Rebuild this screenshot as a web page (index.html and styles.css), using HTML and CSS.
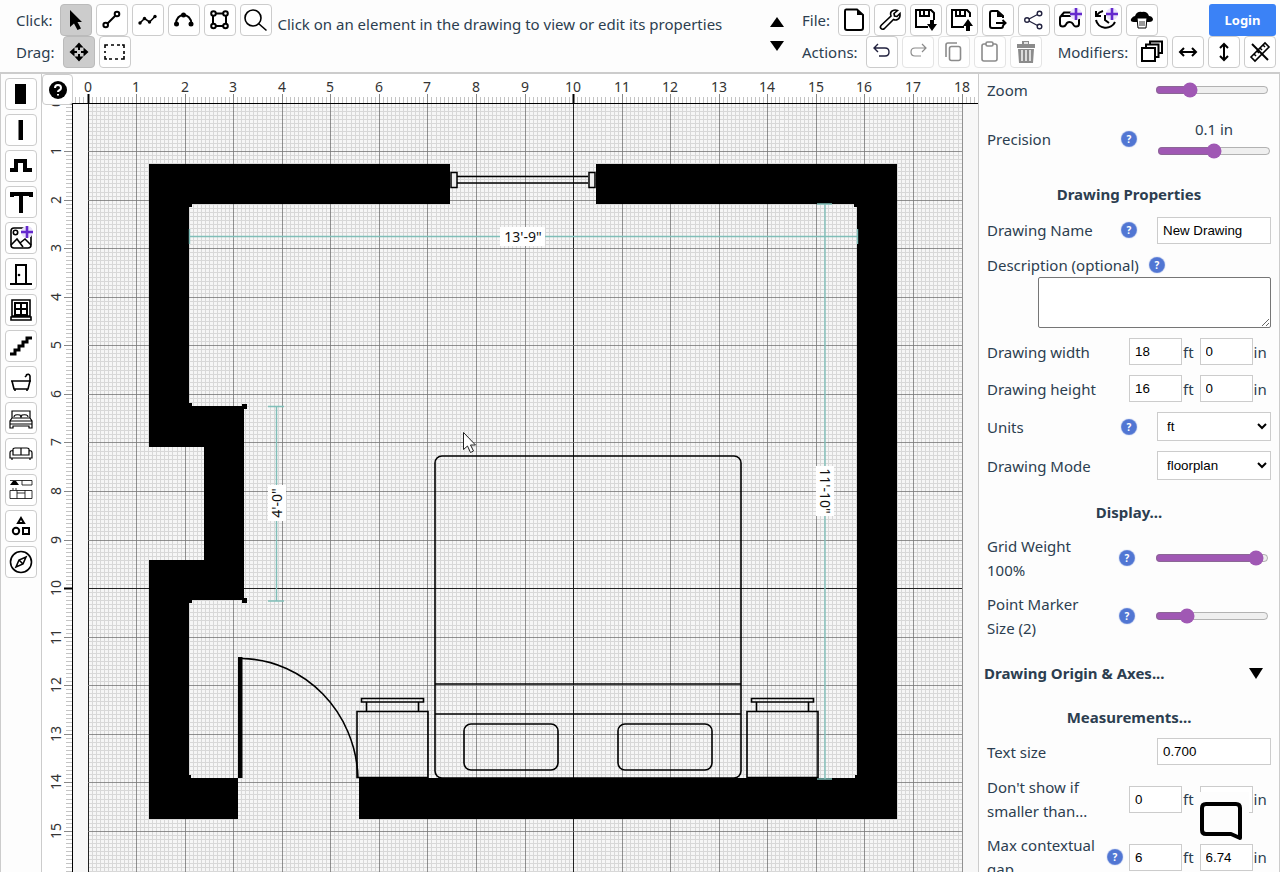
FILE: index.html
```html
<!DOCTYPE html>
<html lang="en">
<head>
<meta charset="utf-8">
<title>New Drawing</title>
<link rel="stylesheet" href="styles.css">
</head>
<body>
<div class="app">
  <header class="toolbar">
    <div class="tool-rows">
      <div class="tool-row">
        <span class="row-label">Click:</span>
        <button class="tool active" aria-label="Select"><svg viewBox="0 0 32 32"><path class="solid" d="M10 6V23L14 19.500L17.500 26L21 24.500L17.500 18H22Z"/></svg></button>
        <button class="tool" aria-label="Line"><svg viewBox="0 0 32 32"><path class="ink" d="M11.500 19.500L19.500 11.500"/><circle class="ink" cx="9.700" cy="21" r="2.300"/><circle class="ink" cx="21" cy="10" r="2.300"/></svg></button>
        <button class="tool" aria-label="Polyline"><svg viewBox="0 0 32 32"><path class="mid" d="M8 19L12.500 14.500L17.500 18L23 12.500"/><circle class="solid" cx="8" cy="19" r="1.700"/><circle class="solid" cx="12.500" cy="14.500" r="1.700"/><circle class="solid" cx="17.500" cy="18" r="1.700"/><circle class="solid" cx="23" cy="12.500" r="1.700"/></svg></button>
        <button class="tool" aria-label="Arc"><svg viewBox="0 0 32 32"><path class="ink" d="M8 20C8 8 23 8 23.500 20"/><circle class="solid" cx="8.500" cy="20" r="2.500"/><circle class="solid" cx="15.500" cy="11" r="2.500"/><circle class="solid" cx="23" cy="20" r="2.500"/></svg></button>
        <button class="tool" aria-label="Shape"><svg viewBox="0 0 32 32"><path class="ink" d="M11.500 9.500H19.500M11.500 22H19.500M9 12V19.500M22 12V19.500"/><circle class="ink" cx="9.500" cy="9.500" r="2.300"/><circle class="ink" cx="21.500" cy="9.500" r="2.300"/><circle class="ink" cx="9.500" cy="22" r="2.300"/><circle class="ink" cx="21.500" cy="22" r="2.300"/></svg></button>
        <button class="tool" aria-label="Zoom"><svg viewBox="0 0 32 32"><circle class="mid" cx="13" cy="14" r="8"/><path class="mid" d="M18.500 19.500L26.500 26.500"/></svg></button>
      </div>
      <div class="tool-row">
        <span class="row-label">Drag:</span>
        <button class="tool active" aria-label="Move"><svg viewBox="0 0 32 32"><path class="ink" d="M16 8V14M16 18V24M8 16H14M18 16H24"/><path class="solid" d="M11.500 11.500L16 6.500L20.500 11.500ZM11.500 20.500L16 25.500L20.500 20.500ZM11.500 11.500L6.500 16L11.500 20.500ZM20.500 11.500L25.500 16L20.500 20.500Z"/></svg></button>
        <button class="tool" aria-label="Marquee"><svg viewBox="0 0 32 32"><path class="mid" d="M6 12V9H9M12 9H15M18 9H21M23 9H25V12M25 15V18M25 20V23H22M19 23H16M13 23H10M8 23H6V20M6 17V15"/></svg></button>
      </div>
    </div>
    <p class="hint">Click on an element in the drawing to view or edit its properties</p>
    <div class="hint-nav">
      <button aria-label="Previous"><svg width="14" height="12" viewBox="0 0 14 12"><path d="M0 11L7 1L14 11Z"/></svg></button>
      <button aria-label="Next"><svg width="14" height="12" viewBox="0 0 14 12"><path d="M0 1L7 11L14 1Z"/></svg></button>
    </div>
    <div class="tool-rows commands">
      <div class="tool-row">
        <span class="row-label">File:</span>
        <button class="tool" aria-label="New"><svg viewBox="0 0 32 32"><path class="ink" d="M8 5.500H19L25 11V24Q25 26 23 26H9Q7 26 7 24V7Q7 5.500 8 5.500Z"/><path class="solid" d="M19 5.500V11H25Z"/></svg></button>
        <button class="tool" aria-label="Settings"><svg viewBox="0 0 32 32"><path class="mid" d="M17 12Q15.500 8 19 6.500Q21 5.500 23.500 6.500L20 9.500L20.500 12L23 12.500L26 9.500Q26.500 14 23.500 15.500Q21.500 16.500 19.500 15.500L10.500 24.500Q8.500 26 7 24.500Q5.500 23 7.500 21Z"/></svg></button>
        <button class="tool" aria-label="Save"><svg viewBox="0 0 32 32"><path class="ink" d="M18 23H6V6H21L24 9V16"/><path class="solid" d="M9 5H20V13H9ZM20 16H24V20H27L22 27L17 20H20Z"/><path class="gap" d="M11 7H13V11H11ZM15 7H18V11H15Z"/></svg></button>
        <button class="tool" aria-label="Open"><svg viewBox="0 0 32 32"><path class="ink" d="M18 23H6V6H21L24 9V13"/><path class="solid" d="M9 5H20V13H9ZM20 27H24V22H27L22 15L17 22H20Z"/><path class="gap" d="M11 7H13V11H11ZM15 7H18V11H15Z"/></svg></button>
        <button class="tool" aria-label="Export"><svg viewBox="0 0 32 32"><path class="ink" d="M21 14V12L15.500 7H10Q8 7 8 9V22Q8 24 10 24H19Q21 24 21 22M14 19H23M20.500 16L23.500 19L20.500 22"/><path class="solid" d="M15 7V13H21Z"/></svg></button>
        <button class="tool" aria-label="Share"><svg viewBox="0 0 32 32"><path class="navy" d="M11 15L19.500 10.500M11 17L19.500 21.500"/><circle class="navy" cx="9" cy="16" r="2.300"/><circle class="navy" cx="21.500" cy="9.500" r="2.300"/><circle class="navy" cx="21.500" cy="22.500" r="2.300"/></svg></button>
        <button class="tool" aria-label="3D view"><svg viewBox="0 0 32 32"><path class="ink" d="M8 12H23Q25 12 25 14V20Q25 22.500 22 22.500Q20 22.500 19 20Q18 18 15.500 18Q13 18 12 20.500Q11 22.500 9 22.500Q6 22.500 6 20V14Q6 12 8 12ZM7 12L10 8.500H18"/><circle class="halo" cx="22" cy="10" r="6"/><path class="plus" d="M22 4V16M16 10H28"/></svg></button>
        <button class="tool" aria-label="History"><svg viewBox="0 0 32 32"><path class="ink" d="M6 16A10 9.500 0 0 0 25 18M7 11Q9 8 13 7M6 7V12H11M15 11V16L19 19"/><circle class="halo" cx="22" cy="10" r="6"/><path class="plus" d="M22 4V16M16 10H28"/></svg></button>
        <button class="tool" aria-label="Clear cloud storage"><svg viewBox="0 0 32 32"><path class="solid" d="M8 18Q4 18 5 15Q7 12 9 12Q11 7 16 8Q21 7 23 12Q26 12 27 15Q27 18 23 18Z"/><path class="bin" d="M11 14H21L20 24H12Z"/><path class="hair" d="M14 17V22M16 17V22M18 17V22"/></svg></button>
        <button class="login">Login</button>
      </div>
      <div class="tool-row">
        <span class="row-label">Actions:</span>
        <button class="tool" aria-label="Undo"><svg viewBox="0 0 32 32"><path class="navy" d="M12 8L8 12L12 16M8 12H19Q23 12 23 16T19 20H13"/></svg></button>
        <button class="tool faded" aria-label="Redo"><svg viewBox="0 0 32 32"><path class="thin" d="M20 8L24 12L20 16M24 12H13Q9 12 9 16T13 20H19"/></svg></button>
        <button class="tool faded" aria-label="Copy"><svg viewBox="0 0 32 32"><path class="mid" d="M8 21V9Q8 7 10 7H19"/><rect class="mid" x="11.500" y="10.500" width="11" height="14" rx="2"/></svg></button>
        <button class="tool faded" aria-label="Paste"><svg viewBox="0 0 32 32"><path class="mid" d="M12 8H10Q8 8 8 10V23Q8 25 10 25H21Q23 25 23 23V10Q23 8 21 8H19"/><rect class="mid" x="12" y="6" width="7" height="4" rx="1.500"/></svg></button>
        <button class="tool faded" aria-label="Delete"><svg viewBox="0 0 32 32"><path class="solid" d="M7 8H12V5H19V8H25V12H7ZM8 13H24L23 27H9Z"/><path class="slits" d="M12 14V25M16 14V25M20 14V25M14 7H18"/></svg></button>
        <span class="row-label second">Modifiers:</span>
        <button class="tool" aria-label="Duplicate"><svg viewBox="0 0 32 32"><path class="ink" d="M10 11V8.500H22.500V21H20M14 8V5.500H26V17H23"/><rect class="ink" x="6" y="12" width="13" height="13"/></svg></button>
        <button class="tool" aria-label="Flip horizontally"><svg viewBox="0 0 32 32"><path class="ink" d="M8 16H24M12 12L8 16L12 20M20 12L24 16L20 20"/></svg></button>
        <button class="tool" aria-label="Flip vertically"><svg viewBox="0 0 32 32"><path class="ink" d="M16 8V24M12 12L16 8L20 12M12 20L16 24L20 20"/></svg></button>
        <button class="tool" aria-label="Hide measurements"><svg viewBox="0 0 32 32"><path class="mid" d="M7 21L21 7L25 11L11 25ZM10 18L12 20M13 15L15 17M16 12L18 14M19 9L21 11"/><path class="ink" d="M8 8L24 24"/></svg></button>
      </div>
    </div>
  </header>

  <main class="workspace">
    <nav class="palette" aria-label="Elements">
      <button class="tool" aria-label="Thick wall"><svg viewBox="0 0 32 32"><path class="solid" d="M10 6H21V26H10Z"/></svg></button>
      <button class="tool" aria-label="Thin wall"><svg viewBox="0 0 32 32"><path class="solid" d="M13.500 6H18V26H13.500Z"/></svg></button>
      <button class="tool" aria-label="Chimney breast"><svg viewBox="0 0 32 32"><path class="block" d="M5 20H11V11H20V20H27"/></svg></button>
      <button class="tool" aria-label="Text"><svg viewBox="0 0 32 32"><path class="block" d="M7 11V8H26V11M16 8V27"/></svg></button>
      <button class="tool" aria-label="Image"><svg viewBox="0 0 32 32"><rect class="mid" x="6" y="6" width="20" height="20" rx="3"/><circle class="mid" cx="10.500" cy="10.500" r="2.200"/><path class="mid" d="M6 23L12 17L18 25M15 21L20 17L26 23"/><circle class="halo" cx="22" cy="10" r="6"/><path class="plus" d="M22 4V16M16 10H28"/></svg></button>
      <button class="tool" aria-label="Door"><svg viewBox="0 0 32 32"><path class="ink" d="M5 26H27M11 26V7H21V26"/><circle class="solid" cx="14" cy="17" r="1.300"/></svg></button>
      <button class="tool" aria-label="Window"><svg viewBox="0 0 32 32"><path class="mid" d="M7 6H25V22H7ZM6 23H26V26H6Z"/><path class="ink" d="M10 9H22V21H10ZM16 9V21M10 15H22"/></svg></button>
      <button class="tool" aria-label="Stairs"><svg viewBox="0 0 32 32"><path class="heavy" d="M5 24H10V20H14V16H18V12H22V8H27"/></svg></button>
      <button class="tool" aria-label="Bathroom"><svg viewBox="0 0 32 32"><path class="mid" d="M6 15H26M7 15L9 23H23L25 15V10Q24 7 21 9M20 11L22 9M10 23V25M22 23V25"/></svg></button>
      <button class="tool" aria-label="Bedroom"><svg viewBox="0 0 32 32"><path class="thin" d="M7 16V9H25V16M7 16L5 19V26H8V24H24V26H27V19L25 16ZM5 19H27M5 22H27M9 15Q9 12 15 13L16 15L17 13Q23 12 23 15"/></svg></button>
      <button class="tool" aria-label="Living room"><svg viewBox="0 0 32 32"><path class="thin" d="M8 17V11Q8 10 10 10H22Q24 10 24 11V17H8ZM16 10V17M8 13Q5 12 5 15V20H27V15Q27 12 24 13M7 20V22M25 20V22"/></svg></button>
      <button class="tool" aria-label="Kitchen"><svg viewBox="0 0 32 32"><path class="hair" d="M5 6.500H27M17 6.500V11H27V6.500M5 16.500H27V24.500H5ZM12 16.500V24.500M20 16.500V24.500M12 19H20M8 14V16M11 14V16"/><path class="solid" d="M8 7H11L14 11H5Z"/></svg></button>
      <button class="tool" aria-label="Shapes"><svg viewBox="0 0 32 32"><path class="ink" d="M16 8L19 13H13Z"/><circle class="ink" cx="11" cy="21" r="3.200"/><rect class="ink" x="18" y="18" width="6" height="6"/></svg></button>
      <button class="tool" aria-label="Compass"><svg viewBox="0 0 32 32"><circle class="mid" cx="16" cy="16" r="10.500"/><path class="mid" d="M21 11L18 18L11 21L14 14ZM14 14L18 18"/></svg></button>
    </nav>

    <section class="canvas" aria-label="Drawing">
      <svg class="plan">
        <g transform="translate(-42 -74)">
          <rect class="sheet" x="88" y="103" width="874" height="780"/>
          <g id="grid"></g>
          <path class="wall" d="M149 164H450V204H189V406H244V600H189V778H238V819H149V560H204V447H149ZM596 164H897V819H359V778H857V204H596Z"/>
          <path class="wall" d="M187 202h5v5h-5zM854 202h5v5h-5zM187 403h5v5h-5zM242 404h5v5h-5zM242 598h5v5h-5zM187 599h5v4h-5zM187 775h4v5h-4zM855 775h4v5h-4z"/>
          <path class="fitting" d="M457 176.500H588M457 183H588"/>
          <path class="frame" d="M451 172.500H457V187.500H451ZM589 172.500H595V187.500H589Z"/>
          <path class="measure" d="M189 236.500H857M189.500 229V244M857.500 229V244M276.500 406V601M268 406.500H284M268 601H284M825 204V779M817 204H832M817 779H832"/>
          <path class="solid" d="M238 657H242.500V778H238Z"/>
          <path class="fitting" d="M242 658.500C305 660 356 712 358 778"/>
          <g id="nightstand" class="fitting"><path d="M357 711.500H428V777.500H357ZM366.500 702V711M418.500 702V711M361.500 698.500H423.500V702H361.500Z"/></g>
          <use href="#nightstand" x="390"/>
          <g class="fitting">
            <rect x="435" y="456" width="306" height="322" rx="7"/>
            <path d="M435 684H741M435 714H741"/>
            <rect x="464" y="724" width="94" height="46" rx="7"/>
            <rect x="618" y="724" width="94" height="46" rx="7"/>
          </g>
          <g class="tag">
            <rect x="500" y="227" width="45" height="19"/>
            <text x="523" y="242">13'-9"</text>
            <g transform="translate(277 503) rotate(-90)"><rect x="-18" y="-9" width="36" height="18"/><text y="5">4'-0"</text></g>
            <g transform="translate(825 491) rotate(90)"><rect x="-25" y="-9" width="50" height="18"/><text y="5">11'-10"</text></g>
          </g>
          <path class="pointer" d="M463.500 432.500V449.500L467.500 446L470.500 452.500L473.500 451L470.500 445H475.500Z"/>
          <path class="ruler" d="M42 74H978V103H72V872H42Z"/>
          <g id="ticks"></g>
          <path class="edge" d="M72 103.500H978M72.500 103V1600"/>
        </g>
      </svg>
      <button class="help" aria-label="Help"><svg width="18" height="18" viewBox="0 0 18 18"><circle cx="9" cy="9" r="9"/><path d="M6 7Q6 4 9 4T12 7Q12 8.500 10 9.500Q9 10 9 11M9 13V14.500"/></svg></button>
    </section>

    <aside class="properties">
      <div class="field zoom"><label for="zoom">Zoom</label><input id="zoom" type="range" value="28"></div>
      <div class="field precision"><label for="precision">Precision</label><button class="info" aria-label="About precision">?</button><div class="stacked"><output for="precision">0.1 in</output><input id="precision" type="range" value="50"></div></div>
      <h2 class="title">Drawing Properties</h2>
      <div class="field name"><label for="name">Drawing Name</label><button class="info" aria-label="About the name">?</button><input class="box wide" id="name" type="text" value="New Drawing"></div>
      <div class="description"><div class="caption"><label for="description">Description (optional)</label><button class="info" aria-label="About the description">?</button></div><textarea id="description"></textarea></div>
      <div class="field"><label for="width-ft">Drawing width</label><span class="pair"><input class="box" id="width-ft" value="18"><span class="unit">ft</span><input class="box inches" aria-label="Width inches" value="0"><span class="unit">in</span></span></div>
      <div class="field"><label for="height-ft">Drawing height</label><span class="pair"><input class="box" id="height-ft" value="16"><span class="unit">ft</span><input class="box inches" aria-label="Height inches" value="0"><span class="unit">in</span></span></div>
      <div class="field choice"><label for="units">Units</label><button class="info" aria-label="About units">?</button><select class="box wide" id="units"><option>ft</option></select></div>
      <div class="field choice"><label for="mode">Drawing Mode</label><select class="box wide" id="mode"><option>floorplan</option></select></div>
      <h2 class="title display">Display...</h2>
      <div class="field tall"><label for="weight">Grid Weight<br>100%</label><button class="info" aria-label="About grid weight">?</button><input id="weight" type="range" value="95"></div>
      <div class="field tall"><label for="marker">Point Marker<br>Size (2)</label><button class="info" aria-label="About point markers">?</button><input id="marker" type="range" value="24"></div>
      <h2 class="title fold">Drawing Origin &amp; Axes...<svg width="14" height="11" viewBox="0 0 14 11"><path d="M0 0H14L7 11Z"/></svg></h2>
      <h2 class="title measurements">Measurements...</h2>
      <div class="field"><label for="text-size">Text size</label><input class="box wide" id="text-size" value="0.700"></div>
      <div class="field tall"><label for="min-ft">Don't show if<br>smaller than...</label><span class="pair"><input class="box" id="min-ft" value="0"><span class="unit">ft</span><input class="box inches" aria-label="Smallest inches"><span class="unit">in</span></span></div>
      <div class="field tall"><label for="gap-ft">Max contextual<br>gap</label><button class="info near" aria-label="About contextual gap">?</button><span class="pair"><input class="box" id="gap-ft" value="6"><span class="unit">ft</span><input class="box inches" aria-label="Gap inches" value="6.74"><span class="unit">in</span></span></div>
    </aside>
  </main>
  <button class="chat" aria-label="Chat"><svg width="42" height="40" viewBox="0 0 42 40"><path d="M6 3H36Q40 3 40 7V37L31 33H6Q2 33 2 29V7Q2 3 6 3Z"/></svg></button>
</div>
<script src="script.js"></script>
</body>
</html>
```
FILE: styles.css
```css
* { box-sizing: border-box; }
body { margin: 0; color: #2c3e50; font: 15px/24px "Noto Sans", "Open Sans", sans-serif; }
button, input, select, textarea { margin: 0; font-family: "Liberation Sans", Arial, sans-serif; color: #000; }
button { padding: 0; border: 0; background: none; }
p, h2 { margin: 0; }
svg { display: block; }

.app { display: flex; flex-direction: column; height: 100vh; overflow: hidden; position: relative; background: #fdfdfd; }
.toolbar { display: flex; flex: none; padding: 4px 4px 4px 16px; border-bottom: 2px solid #ccc; }
.tool-row { display: flex; align-items: center; gap: 4px; }
.row-label { flex: none; margin-right: 4px; }
.commands { width: 474px; flex: none; }
.row-label.second { margin: 0 0 0 12px; }
.row-label.second + .tool { margin-left: auto; }
.tool { width: 32px; height: 32px; flex: none; border: 1px solid #ccc; border-radius: 4px; background: #fff; }
.tool svg { width: 32px; height: 32px; margin: -1px; }
.tool.active { background: #ccc; border-color: #bbb; }
.tool.faded svg { opacity: 0.45; }
.tool.faded { border-color: #e4e4e4; }
.login { width: 67px; height: 32px; margin-left: auto; border-radius: 3px; background: #3b82f6; color: #fff; font: bold 13px "Noto Sans", sans-serif; }
.hint { flex: 1; padding: 8px 0 0 5px; white-space: nowrap; }
.hint-nav { display: flex; flex-direction: column; gap: 12px; padding: 12px 18px 0 0; }

.ink, .mid, .thin, .hair, .navy, .heavy, .block { fill: none; stroke: #000; stroke-width: 2; }
.mid { stroke-width: 1.6; }
.thin { stroke-width: 1.2; }
.hair { stroke-width: 0.8; }
.heavy { stroke-width: 3; }
.block { stroke-width: 4; }
.navy { stroke: #22223f; stroke-width: 1.4; }
.solid { fill: #000; }
.gap { fill: #fff; }
.bin { fill: #fff; stroke: #000; }
.slits { stroke: #fff; stroke-width: 1.4; }
.halo { fill: #e9e2fa; }
.plus { stroke: #6429cd; stroke-width: 2.6; }

.workspace { display: flex; flex: 1; min-height: 0; }
.palette { display: flex; flex-direction: column; gap: 4px; width: 42px; flex: none; padding: 4px; border: solid #ccc; border-width: 0 1px; }
.canvas { flex: 1; min-width: 0; position: relative; background: #f7f7f7; }
.plan { width: 100%; height: 100%; }
.sheet { fill: #f6f6f6; }
.inch { stroke: #d8d8d8; }
.foot { stroke: #777; stroke-opacity: 0.8; }
.axis { stroke: #222; stroke-opacity: 1; }
.tick { stroke: #c4c4c4; }
.foot-tick { stroke: #888; }
.axis-tick { stroke: #000; stroke-width: 2; }
.tick-label { font-size: 14px; fill: #333; text-anchor: middle; }
.ruler { fill: #fff; }
.edge { stroke: #000; stroke-width: 1; }
.wall { fill: #000; }
.fitting { fill: none; stroke: #000; stroke-width: 1.6; }
.frame { fill: #eee; stroke: #000; stroke-width: 1.5; }
.measure { stroke: #80beb8; stroke-width: 1.4; }
.tag { font-size: 14px; text-anchor: middle; fill: #111; }
.tag rect { fill: #fff; }
.pointer { fill: #fff; stroke: #222; }
.help { position: absolute; left: 0; top: 0; display: grid; place-items: center; width: 31px; height: 31px; border: 1px solid #ccc; border-radius: 4px; background: #fff; }
.help path { fill: none; stroke: #fff; stroke-width: 2; }

.properties { width: 302px; flex: none; overflow: hidden; padding: 0 8px; border: solid #ccc; border-width: 0 1px; }
.field { display: flex; align-items: center; height: 37px; }
.field label { flex: 1; white-space: nowrap; }
.field.zoom { height: 32px; }
.field.precision { height: 66px; }
.field.name { height: 28px; }
.field.choice { height: 39px; }
.field.tall { height: 58px; }
.field input[type="range"] { width: 114px; height: 16px; margin: 0 2px 0 0; accent-color: #a058b4; }
.field .stacked { width: 114px; text-align: center; }
.field .stacked input { margin: 0; }
.stacked output, .stacked input { display: block; }
.stacked output { height: 24px; line-height: 20px; }
.info { width: 14px; height: 14px; margin-right: 21px; border-radius: 50%; background: #5176d3; color: #fff; font: bold 10px/14px "Noto Sans", sans-serif; box-shadow: 0 0 1px 1px #5176d3; }
.tall .info.near { margin-right: 7px; }
.box { height: 27px; width: 53px; border: 1px solid #ccc; padding: 0 5px; background: #fff; }
.box.wide { width: 114px; }
select.box { height: 29px; }
.pair { display: flex; align-items: center; width: 142px; }
.unit { margin-left: 1px; width: 17px; }
.box.inches + .unit { width: 18px; }
.title { height: 44px; font-size: 15px; line-height: 44px; text-align: center; }
.display { padding-top: 5px; }
.description { padding: 9px 0 5px; }
.caption { display: flex; align-items: center; gap: 11px; }
.caption .info { margin: 0; }
.description textarea { display: block; width: 233px; height: 51px; margin-left: auto; border: 1px solid #767676; border-radius: 2px; }
.title.fold { display: flex; align-items: center; justify-content: space-between; height: 56px; margin-left: -3px; padding-right: 8px; }
.title.measurements { height: 32px; line-height: 32px; }
.chat { position: absolute; right: 31px; bottom: 29px; width: 49px; height: 51px; padding-top: 7px; background: #fdfdfd; }
.chat path { fill: none; stroke: #000; stroke-width: 4; stroke-linejoin: round; }
```
FILE: script.js
```js
const origin = { x: 88, y: 103 };
const foot = 48.56;
const size = { x: 18, y: 16 };
const right = 962;
const bottom = 880;

let inches = "", feet = "", ticks = "";

const line = (cls, x1, y1, x2, y2) =>
  `<line class="${cls}" x1="${x1}" y1="${y1}" x2="${x2}" y2="${y2}"/>`;
const snap = (start, units) => Math.floor(start + units * foot) + 0.5;

for (let i = -3; i <= size.x * 12 + 3; i++) {
  const x = snap(origin.x, i / 12);
  if (i % 12) {
    if (i > 0 && i < size.x * 12) inches += line("inch", x, origin.y, x, bottom);
    ticks += line("tick", x, 97, x, 103);
  } else {
    const n = i / 12;
    const axis = n % 10 === 0;
    feet += line(axis ? "foot axis" : "foot", x, origin.y, x, bottom);
    ticks += line(axis ? "axis-tick" : "foot-tick", x, 94, x, 103);
    ticks += `<text class="tick-label" x="${Math.floor(x)}" y="92">${n}</text>`;
  }
}
for (let i = 0; i < size.y * 12; i++) {
  const y = snap(origin.y, i / 12);
  if (i % 12) {
    inches += line("inch", origin.x, y, right, y);
    ticks += line("tick", 66, y, 72, y);
  } else {
    const n = i / 12;
    const axis = n % 10 === 0;
    feet += line(axis ? "foot axis" : "foot", origin.x, y, right, y);
    ticks += line(axis ? "axis-tick" : "foot-tick", 64, y, 72, y);
    ticks += `<text class="tick-label" transform="translate(61 ${Math.floor(y)}) rotate(-90)">${n}</text>`;
  }
}
document.getElementById("grid").innerHTML = inches + feet;
document.getElementById("ticks").innerHTML = ticks;
```
